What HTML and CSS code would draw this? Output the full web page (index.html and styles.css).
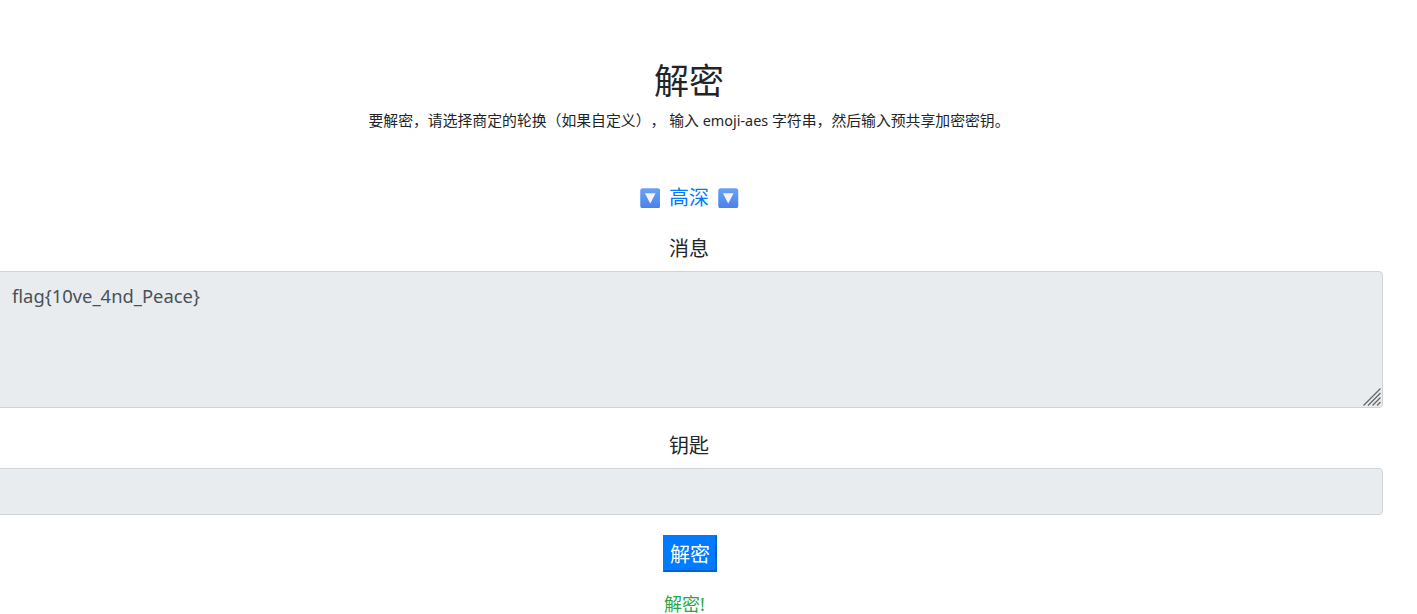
FILE: index.html
```html
<!DOCTYPE html>
<html lang="zh">
<head>
<meta charset="utf-8">
<title>解密</title>
<link rel="stylesheet" href="styles.css">
</head>
<body>
<main class="page">
  <header class="intro">
    <h1 class="title">解密</h1>
    <p class="lead">要解密，请选择商定的轮换（如果自定义）， 输入 <span class="latin">emoji-aes</span> 字符串，然后输入预共享加密密钥。</p>
  </header>
  <a class="toggle" href="#">
    <svg class="arrow" viewBox="0 0 20 20" aria-hidden="true">
      <defs><linearGradient id="tile" x1="0" y1="0" x2="0" y2="1"><stop offset="0" stop-color="#68a2f6"/><stop offset="1" stop-color="#4a82e8"/></linearGradient></defs>
      <rect x="0.25" y="0.25" width="19.5" height="19.5" rx="2.5" fill="url(#tile)"/>
      <path d="M4.8 5h10.4l-5.2 10z" fill="#fbf1fb"/>
    </svg>
    <span>高深</span>
    <svg class="arrow" viewBox="0 0 20 20" aria-hidden="true">
      <rect x="0.25" y="0.25" width="19.5" height="19.5" rx="2.5" fill="url(#tile)"/>
      <path d="M4.8 5h10.4l-5.2 10z" fill="#fbf1fb"/>
    </svg>
  </a>
  <form class="form">
    <div class="field">
      <label class="label" for="msg">消息</label>
      <div class="area-wrap">
        <textarea id="msg" class="control area" readonly>flag{10ve_4nd_Peace}</textarea>
        <svg class="grip" viewBox="0 0 18 18" aria-hidden="true">
          <path d="M0.5 17.5L17.5 0.5M5 17.5L17.5 5M9.5 17.5L17.5 9.5M14 17.5L17.5 14" fill="none" stroke="#666" stroke-width="1.3"/>
        </svg>
      </div>
    </div>
    <div class="field last">
      <label class="label" for="key">钥匙</label>
      <input id="key" class="control single" type="text" readonly>
    </div>
    <button class="submit" type="button">解密</button>
    <p class="status">解密!</p>
  </form>
</main>
</body>
</html>
```
FILE: styles.css
```css
* { box-sizing: border-box; }
html, body { margin: 0; height: 614px; overflow: hidden; background: #fff; }
body { font-family: "Noto Sans", "Noto Sans CJK SC", sans-serif; color: #212529; text-spacing-trim: space-all; }
.page { width: 1388px; margin-left: -5px; padding-top: 53px; text-align: center; }
.title { margin: 0; font-size: 35px; font-weight: 400; line-height: 55px; }
.lead { margin: 0; font-size: 14.85px; line-height: 24px; color: #212529; }
.latin { font-size: 14.4px; }
.toggle { display: flex; justify-content: center; align-items: center; gap: 9px; margin-top: 50px; font-size: 20px; line-height: 30px; color: #007bff; text-decoration: none; }
.arrow { width: 20.5px; height: 20.5px; }
.form { margin-top: 21px; }
.field { margin-bottom: 23px; }
.field.last { margin-bottom: 20px; }
.label { display: block; font-size: 20px; line-height: 30px; margin-bottom: 7px; color: #212529; }
.area-wrap { position: relative; }
.control { display: block; width: 100%; padding: 9px 16px; font: inherit; font-size: 18.4px; line-height: 30px; color: #495057; background: #e9ecef; border: 1px solid #ced4da; border-radius: 4px; outline: none; }
.area { height: 137px; resize: none; }
.single { height: 47px; }
.grip { position: absolute; right: 2px; bottom: 2px; width: 18px; height: 18px; }
.submit { display: block; margin: 0 0 0 calc(50% - 26px); width: 54px; height: 37px; padding: 0; font-family: "Noto Sans CJK SC", sans-serif; font-size: 20px; font-weight: 400; color: #fff; background: #007bff; border-style: solid; border-width: 2px; border-color: #007bff #0062cc #0062cc #007bff; }
.status { margin: 22px 0 0; padding-right: 9px; font-size: 18px; line-height: 20px; color: #28a745; }
```
